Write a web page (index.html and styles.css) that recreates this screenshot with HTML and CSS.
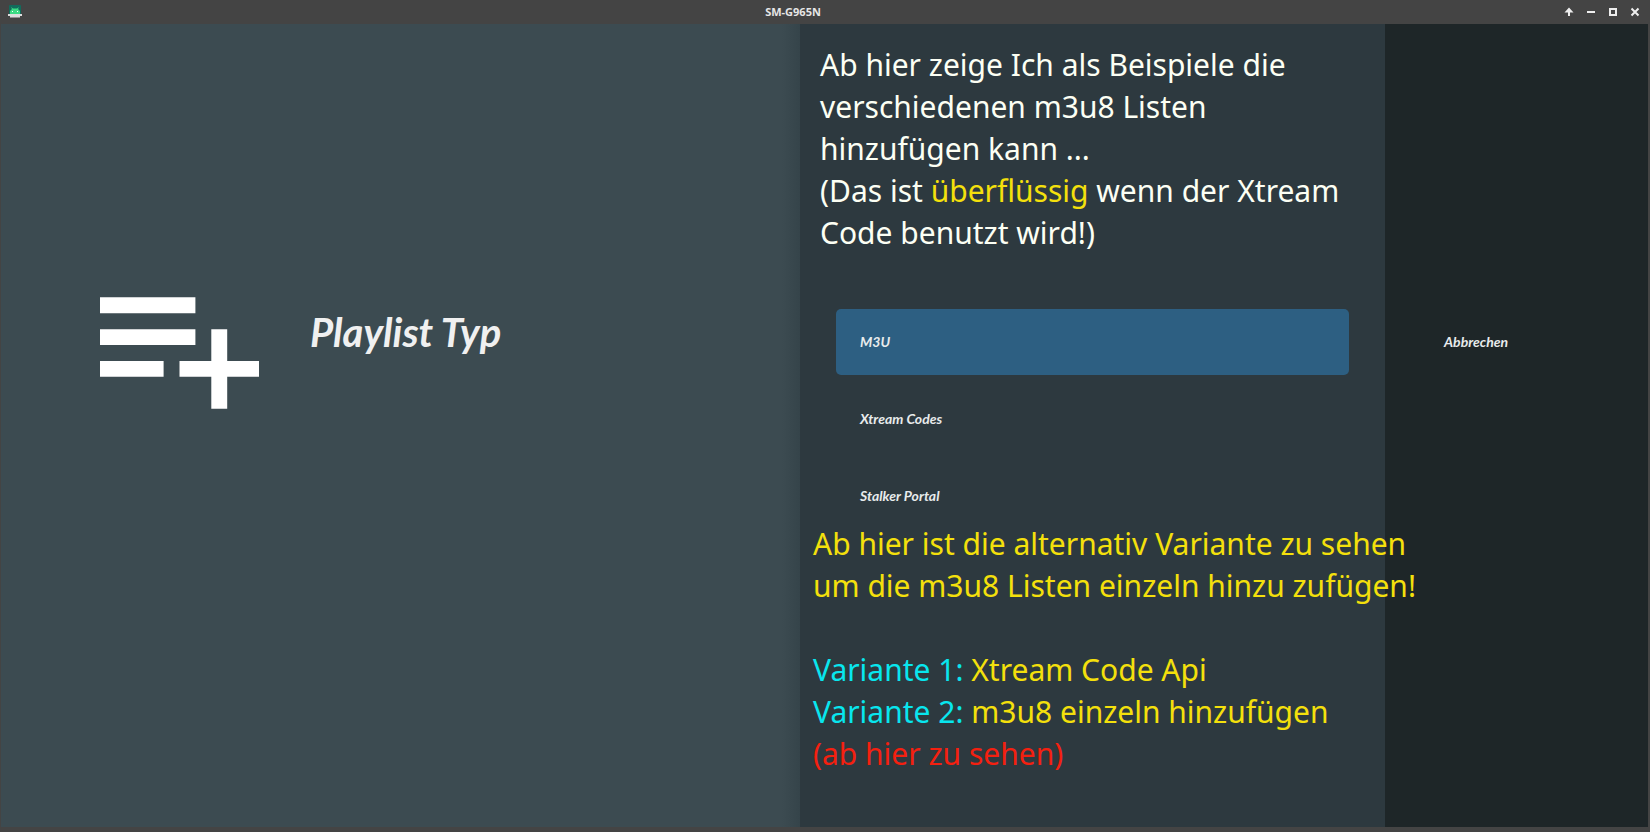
FILE: index.html
```html
<!DOCTYPE html>
<html lang="de">
<head>
<meta charset="utf-8">
<title>SM-G965N</title>
<link rel="stylesheet" href="styles.css">
</head>
<body>
<div class="window">
  <header class="titlebar">
    <svg class="app-icon" viewBox="0 0 14 14" aria-hidden="true">
      <rect x="1" y="0" width="12" height="10" rx="1" fill="#126b5c"/>
      <path d="M2 9V6l2-2-1-2 2 1.500h4L11 2l-1 2 2 2v3z" fill="#3ddc84"/>
      <rect x="4" y="6" width="1" height="1" fill="#fff"/>
      <rect x="9" y="6" width="1" height="1" fill="#fff"/>
      <path d="M0 9h14v2h-2v1.500H2V11H0z" fill="#dedede"/>
    </svg>
    <span class="window-title">SM-G965N</span>
    <div class="window-controls">
      <button type="button" aria-label="Im Vordergrund halten"><svg viewBox="0 0 10 10"><path d="M5 .5L9.500 5.500H6V9H4V5.500H.5z" fill="#eee"/></svg></button>
      <button type="button" aria-label="Minimieren"><svg viewBox="0 0 10 10"><path d="M1 4h8v2H1z" fill="#eee"/></svg></button>
      <button type="button" aria-label="Maximieren"><svg viewBox="0 0 10 10"><path d="M2 2h6v6H2z" fill="none" stroke="#eee" stroke-width="2"/></svg></button>
      <button type="button" aria-label="Schließen"><svg viewBox="0 0 10 10"><path d="M1.500 1.500l7 7M8.500 1.500l-7 7" stroke="#eee" stroke-width="2"/></svg></button>
    </div>
  </header>
  <main class="screen">
    <section class="guidance">
      <svg class="playlist-icon" viewBox="2 6 20 14" aria-hidden="true">
        <path fill="#fff" d="M14 10H2v2h12v-2zm0-4H2v2h12V6zm4 8v-4h-2v4h-4v2h4v4h2v-4h4v-2h-4zM2 16h8v-2H2v2z"/>
      </svg>
      <h1 class="guidance-title">Playlist Typ</h1>
    </section>
    <section class="choices">
      <p class="note note-top">Ab hier zeige Ich als Beispiele die<br>verschiedenen m3u8 Listen<br>hinzufügen kann ...<br>(Das ist <span class="yellow">überflüssig</span> wenn der Xtream<br>Code benutzt wird!)</p>
      <div class="choice-list">
        <button type="button" class="choice selected">M3U</button>
        <button type="button" class="choice">Xtream Codes</button>
        <button type="button" class="choice">Stalker Portal</button>
      </div>
      <p class="note note-bottom yellow">Ab hier ist die alternativ Variante zu sehen<br>um die m3u8 Listen einzeln hinzu zufügen!<br><br><span class="cyan">Variante 1:</span> Xtream Code Api<br><span class="cyan">Variante 2:</span> m3u8 einzeln hinzufügen<br><span class="red">(ab hier zu sehen)</span></p>
    </section>
    <aside class="actions">
      <button type="button" class="choice">Abbrechen</button>
    </aside>
  </main>
</div>
</body>
</html>
```
FILE: styles.css
```css
* {
  box-sizing: border-box;
}

body {
  margin: 0;
  background: #444;
  font-family: "Noto Sans", sans-serif;
}

button {
  margin: 0;
  border: 0;
  background: none;
}

.window {
  display: flex;
  flex-direction: column;
  min-height: 100vh;
  padding: 0 2px 5px 1px;
  background: #444;
}

.titlebar {
  display: flex;
  align-items: center;
  height: 24px;
  padding: 0 8px 0 7px;
}

.app-icon {
  width: 14px;
  height: 14px;
}

.window-title {
  flex: 1;
  color: #e6e6e6;
  font-size: 11px;
  font-weight: 700;
  line-height: 16px;
  text-align: center;
}

.window-controls {
  display: flex;
  gap: 12px;
}

.window-controls button {
  display: flex;
  padding: 0;
}

.window-controls svg {
  width: 10px;
  height: 10px;
}

.screen {
  flex: 1;
  display: grid;
  grid-template-columns: 799fr 585fr 263fr;
}

.guidance {
  display: flex;
  align-items: flex-start;
  gap: 51px;
  padding: 273px 0 0 99px;
  background: linear-gradient(to left, #35444a, #3c4b51 18px);
}

.playlist-icon {
  flex: none;
  width: 159px;
  height: 112px;
}

.guidance-title {
  margin: 11px 0 0;
  color: #f0f0f0;
  font: italic 700 40px/48px Lato, sans-serif;
}

.choices {
  position: relative;
  z-index: 1;
  min-width: 0;
  padding-top: 20px;
  background: #2d393f;
}

.note {
  margin: 0;
  color: #fcfff4;
  font-size: 30px;
  line-height: 42px;
  white-space: nowrap;
}

.note-top {
  padding-left: 20px;
}

.note-bottom {
  margin-top: -6px;
  padding-left: 13px;
}

.yellow {
  color: #f4e00c;
}

.cyan {
  color: #08e6ee;
}

.red {
  color: #f42010;
}

.choice-list {
  display: flex;
  flex-direction: column;
  gap: 11px;
  margin-top: 55px;
  padding: 0 36px;
}

.choice {
  height: 66px;
  padding: 0 24px;
  border-radius: 5px;
  color: #e8ebec;
  font: italic 700 14px/20px Lato, sans-serif;
  text-align: left;
}

.selected {
  background: #2d5f82;
}

.actions {
  padding: 285px 0 0 35px;
  background: #1e2628;
}
```
